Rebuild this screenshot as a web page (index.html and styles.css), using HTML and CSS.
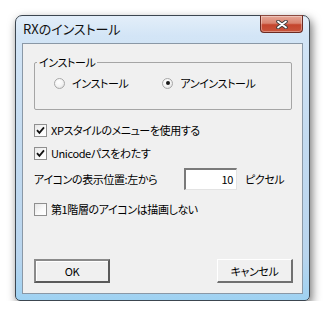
FILE: index.html
```html
<!DOCTYPE html>
<html lang="ja">
<head>
	<meta charset="UTF-8">
	<title>RXのインストール</title>
	<link rel="stylesheet" href="styles.css">
</head>
<body>
	<div class="screen">
		<div class="window">
			<div class="titlebar">
				<span class="title">RXのインストール</span>
				<span class="close">
					<svg width="12" height="9" viewBox="0 0 12 9">
						<path d="M2 1.5 L10 7.5 M10 1.5 L2 7.5" stroke="#3b3b3b" stroke-width="3.6" stroke-linecap="round"/>
						<path d="M2 1.5 L10 7.5 M10 1.5 L2 7.5" stroke="#fff" stroke-width="1.8" stroke-linecap="round"/>
					</svg>
				</span>
			</div>
			<div class="client">
				<fieldset class="group">
					<legend>インストール</legend>
					<div class="radios">
						<label class="opt"><span class="radio"></span>インストール</label>
						<label class="opt second"><span class="radio on"></span>アンインストール</label>
					</div>
				</fieldset>

				<label class="row check-row first"><span class="check on"><svg width="9" height="9" viewBox="0 0 9 9"><path d="M1 4.2 L3.4 6.8 L8 1.4" stroke="#111" stroke-width="1.8" fill="none"/></svg></span>XPスタイルのメニューを使用する</label>
				<label class="row check-row"><span class="check on"><svg width="9" height="9" viewBox="0 0 9 9"><path d="M1 4.2 L3.4 6.8 L8 1.4" stroke="#111" stroke-width="1.8" fill="none"/></svg></span>Unicodeパスをわたす</label>

				<div class="row pos-row">
					<span class="pos-label">アイコンの表示位置:左から</span>
					<span class="num">10</span>
					<span class="unit">ピクセル</span>
				</div>

				<label class="row check-row last"><span class="check"></span>第1階層のアイコンは描画しない</label>

				<div class="buttons">
					<button class="btn default">OK</button>
					<button class="btn">キャンセル</button>
				</div>
			</div>
		</div>
	</div>
</body>
</html>
```

FILE: styles.css
```css
body {
	margin: 0;
	background-color: #fff;
	font-family: "Noto Sans CJK JP", "Liberation Sans", sans-serif;
	font-size: 11px;
	letter-spacing: -0.4px;
	font-feature-settings: "palt";
	color: #000;
}
.screen {
	padding: 15px 0 0 15px;
}
.window {
	box-sizing: border-box;
	width: 295px;
	height: 286px;
	border: 1px solid #3c4650;
	border-radius: 7px 7px 5px 5px;
	padding: 0 6px 6px 6px;
	background: linear-gradient(to bottom, #e3eef9 0px, #d3e5f6 20px, #c4dbf0 120px, #b9d5ee 240px, #9fd2f2 284px);
	box-shadow: 2px 4px 10px rgba(0,0,0,.55);
	display: flex;
	flex-direction: column;
}
.titlebar {
	height: 27px;
	display: flex;
	align-items: flex-start;
	justify-content: space-between;
}
.title {
	margin-top: 5px;
	margin-left: 1px;
	font-size: 13px;
	letter-spacing: 0;
	line-height: 16px;
	color: #111;
}
.close {
	box-sizing: border-box;
	width: 43px;
	height: 18px;
	margin-top: -1px;
	border: 1px solid #6b2a22;
	border-top-color: #8a4a40;
	border-radius: 0 0 4px 4px;
	background: linear-gradient(to bottom, #e6a797 0%, #d98470 45%, #c4452d 55%, #c9553c 100%);
	display: flex;
	align-items: center;
	justify-content: center;
	box-shadow: inset 0 0 0 1px rgba(255,255,255,.35);
}
.close svg {
	display: block;
}
.client {
	box-sizing: border-box;
	flex: 1;
	border: 1px solid #8a98a6;
	background-color: #f0f0f0;
	display: flex;
	flex-direction: column;
}
.group {
	margin: 10px 10px 0 11px;
	padding: 0 0 18px 0;
	border: 1px solid #a5a5a5;
	border-radius: 2px;
}
.group legend {
	margin-left: 2px;
	padding: 0 2px;
	line-height: 16px;
}
.radios {
	margin-top: 5px;
	display: flex;
	align-items: center;
	height: 16px;
	line-height: 16px;
}
.opt {
	display: flex;
	align-items: center;
	margin-left: 19px;
}
.opt.second {
	margin-left: 34px;
}
.radio {
	box-sizing: border-box;
	width: 11px;
	height: 11px;
	border: 1px solid #a8a8a8;
	border-radius: 50%;
	background: radial-gradient(circle at 40% 35%, #fff 0%, #f4f4f4 50%, #d6d6d6 100%);
	margin-right: 7px;
	display: flex;
	align-items: center;
	justify-content: center;
}
.radio.on::after {
	content: "";
	width: 4px;
	height: 4px;
	border-radius: 50%;
	background-color: #1a1a1a;
}
.row {
	display: flex;
	align-items: center;
	margin-left: 11px;
	line-height: 16px;
}
.check-row {
	height: 16px;
	margin-top: 7px;
}
.check-row.first {
	margin-top: 12px;
}
.check-row.last {
	margin-top: 11px;
}
.check {
	box-sizing: border-box;
	width: 13px;
	height: 13px;
	border: 1px solid #8f8f8f;
	background: linear-gradient(135deg, #e6e6e6 0%, #fbfbfb 60%, #fff 100%);
	margin-right: 4px;
	display: flex;
	align-items: center;
	justify-content: center;
}
.check svg {
	display: block;
}
.pos-row {
	margin-top: 7px;
	height: 22px;
}
.pos-label {
	width: 150px;
}
.num {
	box-sizing: border-box;
	width: 53px;
	height: 22px;
	border-style: solid;
	border-width: 2px 1px 1px 2px;
	border-color: #7a7a7a #e3e3e3 #e3e3e3 #7a7a7a;
	background-color: #fff;
	text-align: right;
	padding-right: 3px;
	line-height: 18px;
}
.unit {
	margin-left: 8px;
}
.buttons {
	margin-top: auto;
	margin-bottom: 10px;
	display: flex;
	justify-content: space-between;
	padding: 0 9px 0 11px;
}
.btn {
	box-sizing: border-box;
	width: 76px;
	height: 24px;
	font-family: inherit;
	font-size: 11px;
	letter-spacing: -0.4px;
	font-feature-settings: "palt";
	color: #000;
	background-color: #f0f0f0;
	border-style: solid;
	border-width: 1px 2px 2px 1px;
	border-color: #fff #707070 #707070 #fff;
	padding: 0;
}
.btn.default {
	border-width: 2px;
	border-color: #8a8a8a #5a5a5a #5a5a5a #8a8a8a;
	box-shadow: inset 1px 1px 0 #fff;
}
```
